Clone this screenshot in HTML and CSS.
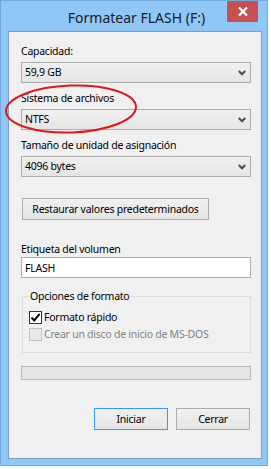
FILE: index.html
```html
<!DOCTYPE html>
<html lang="es">
<head>
<meta charset="utf-8">
<title>Formatear FLASH (F:)</title>
<link rel="stylesheet" href="styles.css">
</head>
<body>
<div class="window">
  <div class="titlebar">
    <span class="title">Formatear FLASH (F:)</span>
    <div class="close">
      <svg width="10" height="9" viewBox="0 0 10 9"><path d="M1 0.5 L9 8.5 M9 0.5 L1 8.5" stroke="#fff" stroke-width="2.2" fill="none"/></svg>
    </div>
  </div>
  <div class="content">
    <div class="label">Capacidad:</div>
    <div class="combo"><span>59,9 GB</span><svg class="chev" width="8" height="6" viewBox="0 0 8 6"><path d="M0.8 1 L4 4.3 L7.2 1" stroke="#4d4d4d" stroke-width="2" fill="none"/></svg></div>
    <div class="label gap">Sistema de archivos</div>
    <div class="combo"><span>NTFS</span><svg class="chev" width="8" height="6" viewBox="0 0 8 6"><path d="M0.8 1 L4 4.3 L7.2 1" stroke="#4d4d4d" stroke-width="2" fill="none"/></svg></div>
    <div class="label gap">Tamaño de unidad de asignación</div>
    <div class="combo"><span>4096 bytes</span><svg class="chev" width="8" height="6" viewBox="0 0 8 6"><path d="M0.8 1 L4 4.3 L7.2 1" stroke="#4d4d4d" stroke-width="2" fill="none"/></svg></div>
    <div class="btn restore">Restaurar valores predeterminados</div>
    <div class="label vol">Etiqueta del volumen</div>
    <div class="input">FLASH</div>
    <fieldset class="group">
      <legend>Opciones de formato</legend>
      <div class="check"><span class="box on"><svg width="11" height="11" viewBox="0 0 11 11"><path d="M1.5 5.5 L4.2 8.4 L9.6 1.8" stroke="#000" stroke-width="2" fill="none"/></svg></span>Formato rápido</div>
      <div class="check disabled"><span class="box"></span>Crear un disco de inicio de MS-DOS</div>
    </fieldset>
    <div class="progress"></div>
    <div class="actions">
      <div class="btn action default">Iniciar</div>
      <div class="btn action">Cerrar</div>
    </div>
  </div>
  <svg class="mark" width="140" height="56" viewBox="0 0 140 56"><ellipse cx="68" cy="26" rx="65" ry="23.5" transform="rotate(-2 68 26)" stroke="#e2141c" stroke-width="2" fill="none"/></svg>
</div>
</body>
</html>
```
FILE: styles.css
```css
* { box-sizing: border-box; }
html, body { margin: 0; padding: 0; background: #ffffff; }
body {
  font-family: "Noto Sans", "Open Sans", sans-serif;
  font-size: 10.5px;
  letter-spacing: -0.25px;
  color: #000;
}

.window {
  position: relative;
  width: 268px;
  height: 466px;
  background: #8fc7f7;
  border: 1px solid #72a8dc;
  padding: 0 5px 6px 7px;
  display: flex;
  flex-direction: column;
}
.titlebar {
  height: 30px;
  position: relative;
  display: flex;
  align-items: center;
  justify-content: center;
}
.title {
  font-family: "Noto Sans", sans-serif;
  font-size: 14px;
  letter-spacing: 0;
  color: #1a1a1a;
  margin-left: 3px;
  margin-top: 2px;
}
.close {
  position: absolute;
  top: 0;
  right: 4px;
  width: 31px;
  height: 21px;
  background: #c75050;
  display: flex;
  align-items: center;
  justify-content: center;
}
.content {
  flex: 1;
  background: #f0f0f0;
  border: 1px solid #7f9fc2;
  padding: 12px 10px 0 12px;
  display: flex;
  flex-direction: column;
  align-items: flex-start;
}
.label { line-height: 15px; height: 15px; white-space: nowrap; }
.label.gap { margin-top: 8px; }
.combo {
  margin-top: 3px;
  width: 230px;
  height: 21px;
  border: 1px solid #acacac;
  background: linear-gradient(#f0f0f0, #e5e5e5);
  display: flex;
  align-items: center;
  justify-content: space-between;
  padding: 0 3px 0 3px;
  line-height: 15px;
}
.chev { margin-right: 1px; margin-top: 1px; }
.btn {
  height: 22px;
  border: 1px solid #acacac;
  background: linear-gradient(#f0f0f0, #e5e5e5);
  display: flex;
  align-items: center;
  justify-content: center;
  white-space: nowrap;
}
.restore { margin-top: 21px; margin-left: 1px; width: 187px; }
.label.vol { margin-top: 22px; }
.input {
  width: 230px;
  height: 21px;
  border: 1px solid #acacac;
  background: #fff;
  padding: 0 3px;
  display: flex;
  align-items: center;
}
.group {
  margin: 11px 0 0 1px;
  width: 229px;
  border: 1px solid #dcdcdc;
  padding: 5px 6px 10px 6px;
  min-width: 0;
}
.group legend { padding: 0 1px; line-height: 15px; }
.check { display: flex; align-items: center; height: 16px; line-height: 16px; white-space: nowrap; }
.check .box {
  width: 13px; height: 13px;
  border: 1px solid #333;
  background: #fff;
  margin-right: 2px;
  display: flex; align-items: center; justify-content: center;
}
.check.disabled { color: #838383; margin-top: 1px; }
.check.disabled .box { border-color: #c4c4c4; background: #e9e9e9; }
.progress {
  margin-top: 13px;
  width: 230px;
  height: 14px;
  border: 1px solid #bcbcbc;
  background: #e6e6e6;
}
.actions {
  margin-top: 28px;
  align-self: stretch;
  display: flex;
  justify-content: flex-end;
  gap: 8px;
  padding-right: 1px;
}
.action { width: 74px; }
.default { border-color: #3399ff; }
.mark { position: absolute; left: 2px; top: 82px; }
```
